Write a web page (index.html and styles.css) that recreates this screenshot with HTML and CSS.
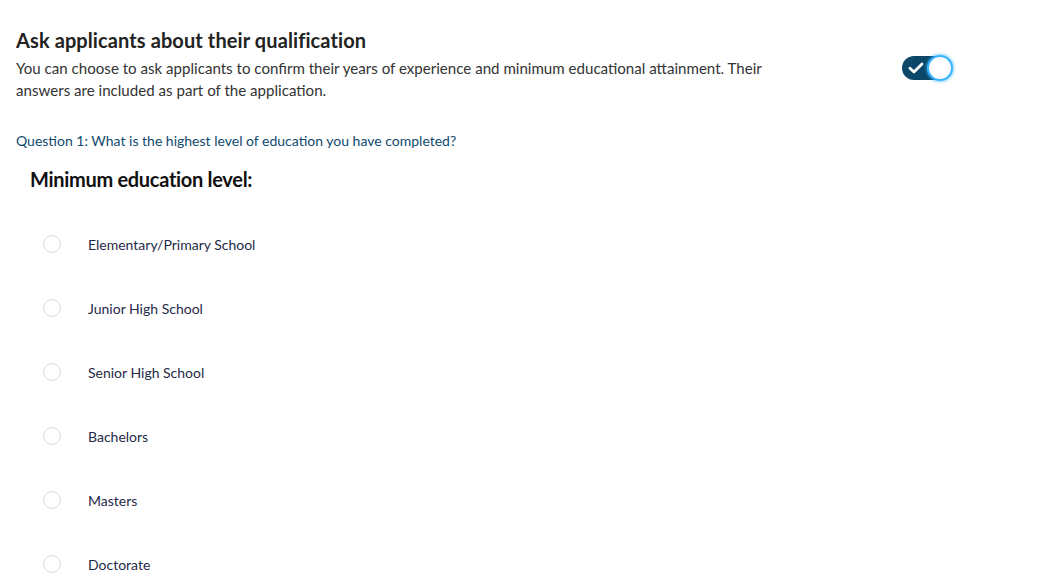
FILE: index.html
```html
<!DOCTYPE html>
<html>
<head>
<meta charset="utf-8">
<link rel="stylesheet" href="styles.css">
</head>
<body>
<div class="page">
  <div class="header">
    <div class="intro">
      <h2 class="title">Ask applicants about their qualification</h2>
      <p class="desc">You can choose to ask applicants to confirm their years of experience and minimum educational attainment. Their answers are included as part of the application.</p>
    </div>
    <div class="toggle">
      <svg class="check" width="16" height="12" viewBox="0 0 16 12"><path d="M2 6.2 L6 10 L14 2" fill="none" stroke="#fff" stroke-width="2.8" stroke-linecap="round" stroke-linejoin="round"/></svg>
      <span class="knob"></span>
    </div>
  </div>
  <p class="question">Question 1: What is the highest level of education you have completed?</p>
  <h3 class="subtitle">Minimum education level:</h3>
  <ul class="options">
    <li class="option"><span class="radio"></span><span class="label">Elementary/Primary School</span></li>
    <li class="option"><span class="radio"></span><span class="label">Junior High School</span></li>
    <li class="option"><span class="radio"></span><span class="label">Senior High School</span></li>
    <li class="option"><span class="radio"></span><span class="label">Bachelors</span></li>
    <li class="option"><span class="radio"></span><span class="label">Masters</span></li>
    <li class="option"><span class="radio"></span><span class="label">Doctorate</span></li>
  </ul>
</div>
</body>
</html>
```
FILE: styles.css
```css
html, body {
  margin: 0;
  padding: 0;
  background: #fff;
  font-family: Lato, "Open Sans", sans-serif;
  overflow: hidden;
}
.page {
  padding: 28px 0 0 16px;
}
.header {
  display: flex;
  align-items: flex-start;
}
.intro {
  width: 775px;
}
.title {
  margin: 0;
  font-size: 20px;
  line-height: 24px;
  font-weight: 700;
  color: #222;
  letter-spacing: 0.1px;
}
.desc {
  margin: 5px 0 0;
  font-size: 15.1px;
  line-height: 22px;
  color: #333;
}
.toggle {
  margin: 28px 0 0 111px;
  position: relative;
  width: 50px;
  height: 24px;
  border-radius: 12px;
  background: #0b4768;
  display: flex;
  align-items: center;
}
.check {
  margin-left: 6px;
}
.knob {
  position: absolute;
  left: 25px;
  top: -1px;
  width: 22px;
  height: 22px;
  border-radius: 50%;
  background: #fff;
  border: 2px solid #38b4ff;
  box-shadow: 0 0 3px 1px rgba(56, 180, 255, 0.6);
}
.question {
  margin: 31px 0 0;
  font-size: 14px;
  line-height: 18px;
  color: #0f4a6e;
}
.subtitle {
  margin: 17px 0 0 14px;
  font-size: 20px;
  line-height: 24px;
  font-weight: 700;
  color: #111;
  letter-spacing: -0.3px;
}
.options {
  list-style: none;
  margin: 43px 0 0;
  padding: 0 0 0 27px;
  display: flex;
  flex-direction: column;
  gap: 44px;
}
.option {
  display: flex;
  align-items: center;
  height: 20px;
}
.radio {
  width: 16px;
  height: 16px;
  border: 1px solid #dcdcdc;
  border-radius: 50%;
  flex: none;
}
.label {
  margin-left: 27px;
  font-size: 14px;
  color: #1f2a48;
}
```
